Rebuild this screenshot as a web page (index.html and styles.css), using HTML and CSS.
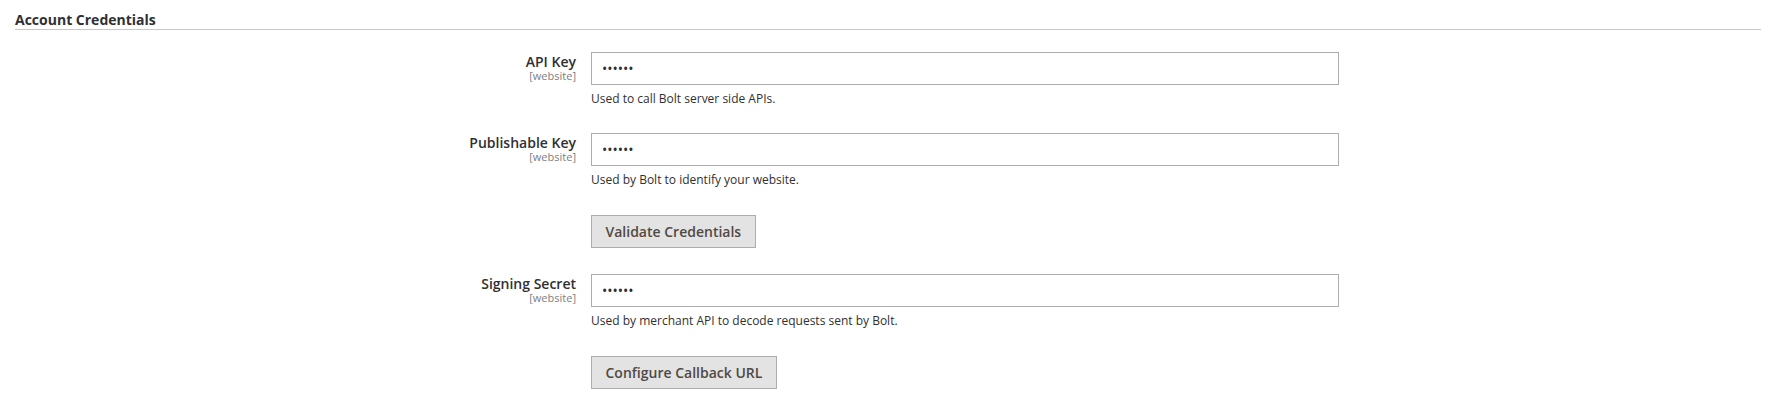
FILE: index.html
```html
<!DOCTYPE html>
<html lang="en">
<head>
<meta charset="utf-8">
<title>Account Credentials</title>
<link rel="stylesheet" href="styles.css">
</head>
<body>
<section class="section">
  <h2 class="section-title">Account Credentials</h2>
  <div class="fields">
    <div class="row">
      <div class="label"><span class="label-text">API Key</span><span class="scope">[website]</span></div>
      <div class="value">
        <input class="input" type="password" value="123456" aria-label="API Key">
        <p class="note">Used to call Bolt server side APIs.</p>
      </div>
    </div>
    <div class="row">
      <div class="label"><span class="label-text">Publishable Key</span><span class="scope">[website]</span></div>
      <div class="value">
        <input class="input" type="password" value="123456" aria-label="Publishable Key">
        <p class="note">Used by Bolt to identify your website.</p>
      </div>
    </div>
    <div class="row row-action">
      <div class="label"></div>
      <div class="value">
        <button class="btn" type="button">Validate Credentials</button>
      </div>
    </div>
    <div class="row">
      <div class="label"><span class="label-text">Signing Secret</span><span class="scope">[website]</span></div>
      <div class="value">
        <input class="input" type="password" value="123456" aria-label="Signing Secret">
        <p class="note">Used by merchant API to decode requests sent by Bolt.</p>
      </div>
    </div>
    <div class="row row-action">
      <div class="label"></div>
      <div class="value">
        <button class="btn" type="button">Configure Callback URL</button>
      </div>
    </div>
  </div>
</section>
</body>
</html>
```

FILE: styles.css
```css
html, body {
  margin: 0;
  padding: 0;
  background: #ffffff;
}

body {
  font-family: "Open Sans", "Liberation Sans", Arial, sans-serif;
  color: #303030;
}

.section {
  margin: 0 15px;
}

.section-title {
  margin: 0;
  padding-top: 11px;
  font-size: 14px;
  line-height: 18px;
  font-weight: 700;
  color: #303030;
  border-bottom: 1px solid #c8c8c8;
}

.fields {
  padding-top: 22px;
  display: flex;
  flex-direction: column;
  gap: 26px;
}

.row {
  display: grid;
  grid-template-columns: 561px 748px;
  column-gap: 15px;
}

.row-action {
  margin-top: 1px;
}

.label {
  display: flex;
  flex-direction: column;
  align-items: flex-end;
  text-align: right;
  padding-top: 2px;
}

.label-text {
  font-size: 14px;
  line-height: 15px;
  font-weight: 600;
  color: #303030;
}

.scope {
  margin-top: 1px;
  font-size: 11px;
  line-height: 12px;
  color: #808080;
}

.value {
  display: flex;
  flex-direction: column;
  align-items: flex-start;
}

.input {
  box-sizing: border-box;
  width: 748px;
  height: 33px;
  margin: 0;
  padding: 0 10px;
  border: 1px solid #adadad;
  border-radius: 0;
  background: #ffffff;
  font-family: "Open Sans", "Liberation Sans", Arial, sans-serif;
  font-size: 14px;
  color: #303030;
  outline: none;
}

.note {
  margin: 6px 0 0;
  font-size: 12px;
  line-height: 16px;
  color: #303030;
}

.btn {
  box-sizing: border-box;
  height: 33px;
  margin: 0;
  padding: 0 13.5px;
  border: 1px solid #adadad;
  border-radius: 0;
  background: #e3e3e3;
  font-family: "Open Sans", "Liberation Sans", Arial, sans-serif;
  font-size: 14px;
  font-weight: 600;
  color: #514943;
  cursor: pointer;
}
```
